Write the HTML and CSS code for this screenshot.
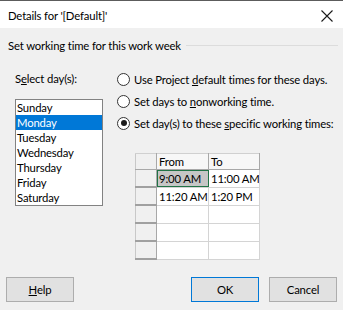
FILE: index.html
```html
<!DOCTYPE html>
<html>
<head>
<meta charset="utf-8">
<link rel="stylesheet" href="styles.css">
</head>
<body>
<div class="dialog">
  <div class="titlebar">
    <span class="title">Details for '[Default]'</span>
    <svg class="close" width="12" height="12" viewBox="0 0 12 12"><path d="M0.5 0.5L11.5 11.5M11.5 0.5L0.5 11.5" stroke="#1a1a1a" stroke-width="1.1" fill="none"/></svg>
  </div>
  <div class="section">
    <span>Set working time for this work week</span>
    <span class="rule"></span>
  </div>
  <div class="main">
    <div class="left">
      <div class="label">S<u>e</u>lect day(s):</div>
      <ul class="list">
        <li>Sunday</li>
        <li class="sel">Monday</li>
        <li>Tuesday</li>
        <li>Wednesday</li>
        <li>Thursday</li>
        <li>Friday</li>
        <li>Saturday</li>
      </ul>
    </div>
    <div class="right">
      <div class="radio"><span class="circle"></span><span>Use Project <u>d</u>efault times for these days.</span></div>
      <div class="radio"><span class="circle"></span><span>Set days to <u>n</u>onworking time.</span></div>
      <div class="radio"><span class="circle on"></span><span>Set day(s) to these <u>s</u>pecific working times:</span></div>
      <table class="grid">
        <tr class="head"><th class="rh"></th><th>From</th><th>To</th></tr>
        <tr><td class="rh"></td><td class="cur">9:00 AM</td><td>11:00 AM</td></tr>
        <tr><td class="rh"></td><td>11:20 AM</td><td>1:20 PM</td></tr>
        <tr><td class="rh"></td><td></td><td></td></tr>
        <tr><td class="rh"></td><td></td><td></td></tr>
        <tr><td class="rh"></td><td></td><td></td></tr>
      </table>
    </div>
  </div>
  <div class="buttons">
    <button class="btn"><u>H</u>elp</button>
    <span class="spacer"></span>
    <button class="btn default">OK</button>
    <button class="btn">Cancel</button>
  </div>
</div>
</body>
</html>
```
FILE: styles.css
```css
html, body {
  margin: 0;
  padding: 0;
}
body {
  width: 343px;
  height: 310px;
  overflow: hidden;
  background: #f0f0f0;
  font-family: "Lato", "Noto Sans", sans-serif;
  font-size: 11.3px;
  letter-spacing: -0.15px;
  color: #000;
}
.dialog {
  height: 310px;
  display: flex;
  flex-direction: column;
}
.titlebar {
  border-top: 1px solid #5c5c5c;
  background: #fff;
  display: flex;
  align-items: center;
  justify-content: space-between;
  padding: 2px 10px 0 8px;
  height: 25px;
}
.close {
  display: block;
}
.section {
  display: flex;
  align-items: center;
  padding: 10px 5px 0 8px;
  line-height: 15px;
  white-space: nowrap;
}
.rule {
  flex: 1;
  height: 1px;
  background: #dcdcdc;
  margin-left: 5px;
}
.main {
  display: flex;
  padding-left: 15px;
  margin-top: 15px;
}
.left {
  width: 88px;
  flex: none;
}
.label {
  line-height: 15px;
  padding-top: 3px;
}
.list {
  list-style: none;
  margin: 13px 0 0 0;
  padding: 0;
  border: 1px solid #828282;
  background: #fff;
}
.list li {
  height: 15px;
  line-height: 15px;
  padding-left: 1px;
}
.list li.sel {
  background: #0078d7;
  color: #fff;
}
.right {
  margin-left: 14px;
}
.radio {
  height: 22px;
  display: flex;
  align-items: center;
  gap: 4px;
  white-space: nowrap;
}
.circle {
  flex: none;
  width: 11px;
  height: 11px;
  border: 1px solid #333;
  border-radius: 50%;
  background: #fff;
  position: relative;
}
.circle.on::after {
  content: "";
  position: absolute;
  left: 2.5px;
  top: 2.5px;
  width: 6px;
  height: 6px;
  border-radius: 50%;
  background: #1a1a1a;
}
.grid {
  margin: 19px 0 0 18px;
  border-collapse: collapse;
  background: #fff;
  table-layout: fixed;
}
.grid td, .grid th {
  padding: 0 0 0 2px;
  height: 16px;
  line-height: 15px;
  font-weight: normal;
  text-align: left;
  border-right: 1px solid #d4d4d4;
  border-bottom: 1px solid #d4d4d4;
  white-space: nowrap;
  overflow: hidden;
}
.grid th {
  height: 15px;
  background: #f7f7f7;
  border-right: 1px solid #a8a8a8;
  border-bottom: 1px solid #a8a8a8;
  border-top: 1px solid #d0d0d0;
}
.grid td:nth-child(2), .grid th:nth-child(2) {
  width: 49px;
}
.grid td:nth-child(3), .grid th:nth-child(3) {
  width: 48px;
}
.grid .rh {
  width: 20px;
  padding: 0;
  background: #f0f0f0;
  border-left: 1px solid #c8c8c8;
  border-right: 1px solid #a8a8a8;
  border-bottom: 2px solid #a0a0a0;
}
.grid th.rh {
  border-bottom: 1px solid #a8a8a8;
}
.grid td.cur {
  background: #c6c6c6;
  outline: 1px solid #217346;
  outline-offset: -1px;
}
.buttons {
  margin-top: auto;
  display: flex;
  gap: 10px;
  padding: 0 6px 8px 6px;
}
.spacer {
  flex: 1;
}
.btn {
  width: 68px;
  height: 25px;
  background: #e1e1e1;
  border: 1px solid #adadad;
  font-family: "Lato", "Noto Sans", sans-serif;
  font-size: 11.3px;
  letter-spacing: -0.15px;
  color: #000;
  padding: 0;
}
.btn.default {
  border: 1px solid #0078d7;
}
```
